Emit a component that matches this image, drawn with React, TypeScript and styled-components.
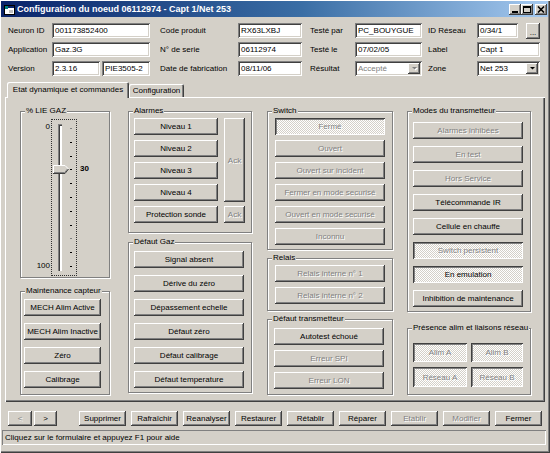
import React from 'react';
import styled, { createGlobalStyle, css } from 'styled-components';

const FACE = '#d4d0c8';
const SHADOW = '#808080';
const DARK = '#404040';

const GlobalStyle = createGlobalStyle`
  html, body {
    margin: 0;
    padding: 0;
    background: #fff;
  }
  body {
    font-family: "Liberation Sans", Arial, sans-serif;
    font-size: 8px;
  }
  * {
    box-sizing: border-box;
  }
`;

const Window = styled.div`
  width: 550px;
  height: 453px;
  padding: 1px 2px 0 1px;
  display: flex;
  flex-direction: column;
  background: ${FACE};
  color: #000;
  overflow: hidden;
  box-shadow: inset 1px 1px #fff, inset -1px -1px ${DARK}, inset -2px -2px ${SHADOW};
`;

const TitleBar = styled.div`
  height: 16px;
  display: flex;
  align-items: center;
  padding: 0 1px 0 3px;
  background: linear-gradient(90deg, #0a246a 0%, #3a6ea5 55%, #a6caf0 100%);
  color: #fff;
  font-size: 9px;
  font-weight: bold;
  white-space: nowrap;
`;

const TitleText = styled.span`
  margin-left: 2px;
`;

const TitleButtons = styled.div`
  margin-left: auto;
  display: flex;
  align-items: center;
`;

const CaptionBtn = styled.div<{ $gap?: boolean }>`
  width: 12px;
  height: 11px;
  margin-left: ${p => (p.$gap ? 2 : 0)}px;
  display: flex;
  align-items: center;
  justify-content: center;
  background: ${FACE};
  box-shadow: inset -1px -1px ${DARK}, inset 1px 1px #fff, inset -2px -2px ${SHADOW};
`;

const Form = styled.div`
  display: grid;
  grid-template-columns: 44px 98px 88px 64px 53px 67px 55px 63px;
  grid-auto-rows: 15px;
  row-gap: 4px;
  margin: 6px 0 0 7px;
`;

const Label = styled.div<{ $indent?: number }>`
  display: flex;
  align-items: center;
  padding-left: ${p => p.$indent ?? 0}px;
  white-space: nowrap;
`;

const Field = styled.div<{ $w?: number; $muted?: boolean }>`
  width: ${p => (p.$w ? `${p.$w}px` : '100%')};
  height: 15px;
  display: flex;
  align-items: center;
  padding-left: 3px;
  background: #fff;
  color: ${p => (p.$muted ? SHADOW : '#000')};
  white-space: nowrap;
  overflow: hidden;
  box-shadow: inset 1px 1px ${SHADOW}, inset -1px -1px #fff, inset 2px 2px ${DARK}, inset -2px -2px ${FACE};
`;

const FieldText = styled.span`
  flex: 1;
`;

const DropBtn = styled.div`
  width: 12px;
  height: 11px;
  margin-right: 2px;
  display: flex;
  align-items: center;
  justify-content: center;
  background: ${FACE};
  box-shadow: inset -1px -1px ${DARK}, inset 1px 1px #fff, inset -2px -2px ${SHADOW};
`;

const Pair = styled.div`
  display: flex;
  align-items: center;
  gap: 2px;
`;

const Btn = styled.button<{ $w?: number; $h?: number; $checked?: boolean }>`
  width: ${p => (p.$w ? `${p.$w}px` : '100%')};
  height: ${p => p.$h ?? 17}px;
  flex: none;
  padding: 0;
  border: none;
  font: 8px "Liberation Sans", Arial, sans-serif;
  color: #000;
  white-space: nowrap;
  background: ${FACE};
  box-shadow: inset -1px -1px ${DARK}, inset 1px 1px #fff, inset -2px -2px ${SHADOW};
  ${p =>
    p.$checked &&
    css`
      background-color: #fff;
      background-image: conic-gradient(${FACE} 25%, #fff 0 50%, ${FACE} 0 75%, #fff 0);
      background-size: 2px 2px;
      box-shadow: inset 1px 1px ${DARK}, inset -1px -1px #fff, inset 2px 2px ${SHADOW};
    `}
  &:disabled {
    color: ${SHADOW};
    text-shadow: 1px 1px #fff;
  }
`;

const DotsBtn = styled(Btn)`
  align-self: center;
  margin-left: 6px;
  padding-top: 4px;
`;

const TabStrip = styled.div`
  height: 16px;
  display: flex;
  align-items: flex-end;
  margin: 6px 0 -1px 6px;
`;

const Tab = styled.div<{ $active?: boolean; $w: number }>`
  position: relative;
  z-index: ${p => (p.$active ? 2 : 0)};
  width: ${p => p.$w}px;
  height: ${p => (p.$active ? 16 : 13)}px;
  margin-bottom: ${p => (p.$active ? 0 : 1)}px;
  display: flex;
  align-items: center;
  justify-content: center;
  padding-bottom: ${p => (p.$active ? 2 : 0)}px;
  background: ${FACE};
  border-radius: 2px 2px 0 0;
  white-space: nowrap;
  box-shadow: inset 1px 1px #fff, inset -1px 0 ${DARK}, inset -2px 0 ${SHADOW};
`;

const Panel = styled.div`
  height: 305px;
  margin: 0 3px 0 4px;
  padding: 14px 0 0 15px;
  display: flex;
  align-items: flex-start;
  box-shadow: inset 1px 1px #fff, inset -1px -1px ${DARK}, inset -2px -2px ${SHADOW};
`;

const Column = styled.div<{ $w: number; $ml?: number }>`
  width: ${p => p.$w}px;
  margin-left: ${p => p.$ml ?? 0}px;
  display: flex;
  flex-direction: column;
`;

const Group = styled.div<{ $h: number; $mt?: number; $pt: number; $pl: number }>`
  height: ${p => p.$h}px;
  margin-top: ${p => p.$mt ?? 0}px;
  padding: 0 0 0 ${p => p.$pl}px;
  border: 1px solid ${SHADOW};
  box-shadow: inset 1px 1px #fff, 1px 1px #fff;
  & > :nth-child(2) {
    margin-top: ${p => p.$pt}px;
  }
`;

const Legend = styled.div`
  width: fit-content;
  height: 10px;
  margin: -6px 0 -4px ${-1}px;
  padding: 0 1px;
  line-height: 10px;
  background: ${FACE};
  white-space: nowrap;
`;

const LegendWrap = styled.div<{ $pl: number }>`
  margin-left: ${p => 4 - p.$pl + 1}px;
`;

const Stack = styled.div<{ $gap: number; $w?: number }>`
  display: flex;
  flex-direction: column;
  gap: ${p => p.$gap}px;
  width: ${p => (p.$w ? `${p.$w}px` : 'auto')};
`;

const AlarmGrid = styled.div`
  display: grid;
  grid-template-columns: 84px 21px;
  grid-auto-rows: 17px;
  column-gap: 6px;
  row-gap: 5px;
`;

const TallCell = styled.div`
  grid-column: 2;
  grid-row: 1 / span 4;
`;

const PresenceGrid = styled.div`
  display: grid;
  grid-template-columns: 54px 52px;
  grid-template-rows: 19px 20px;
  column-gap: 4px;
  row-gap: 5px;
`;

/* slider ("% LIE GAZ") */
const SliderRow = styled.div`
  display: flex;
  align-items: flex-start;
`;

const ScaleLabels = styled.div`
  width: 30px;
  height: 157px;
  padding: 3px 1px 5px 0;
  display: flex;
  flex-direction: column;
  justify-content: space-between;
  align-items: flex-end;
  line-height: 10px;
`;

const SliderBox = styled.div`
  position: relative;
  width: 26px;
  height: 157px;
  display: flex;
  align-items: flex-start;
  border: 1px dotted #303030;
`;

const Track = styled.div`
  width: 4px;
  height: 147px;
  margin: 4px 0 0 6px;
  background: #fff;
  box-shadow: inset 1px 1px ${SHADOW}, inset 2px 2px ${DARK}, inset -1px -1px #fff;
`;

const Ticks = styled.div`
  height: 139px;
  margin: 8px 0 0 8px;
  display: flex;
  flex-direction: column;
  justify-content: space-between;
`;

const Tick = styled.div<{ $light?: boolean }>`
  width: 2px;
  height: 1px;
  background: ${p => (p.$light ? SHADOW : '#000')};
`;

const Thumb = styled.svg`
  position: absolute;
  left: 1px;
`;

const SliderValue = styled.div`
  margin-left: 3px;
  line-height: 10px;
  font-weight: bold;
`;

const BottomRow = styled.div`
  display: flex;
  align-items: center;
  margin: 9px 0 0 7px;
`;

const NavGroup = styled.div`
  display: flex;
  gap: 2px;
  margin-right: 22px;
`;

const ActionGroup = styled.div`
  display: flex;
  gap: 5px;
`;

const StatusBar = styled.div`
  height: 15px;
  margin: 4px 2px 0 1px;
  padding-left: 3px;
  line-height: 15px;
  white-space: nowrap;
  box-shadow: inset 1px 1px ${SHADOW}, inset -1px -1px #fff;
`;

const Arrow = ({ disabled }: { disabled?: boolean }) => (
  <svg width="7" height="5" viewBox="0 0 7 5">
    {disabled && <polygon points="2,2 7,2 4.5,4.5" fill="#fff" />}
    <polygon points="1,1 6,1 3.5,3.5" fill={disabled ? SHADOW : '#000'} />
  </svg>
);

const WinIcon = () => (
  <svg width="11" height="11" viewBox="0 0 11 11">
    <rect x="0.5" y="1.5" width="10" height="9" fill="#fff" stroke="#000" />
    <rect x="1" y="2" width="9" height="2" fill="#0a246a" />
    <rect x="1" y="2" width="3" height="3" fill="#008080" />
    <rect x="5" y="6" width="4" height="3" fill="#c0c0c0" />
  </svg>
);

const MinGlyph = () => (
  <svg width="8" height="7" viewBox="0 0 8 7">
    <rect x="1" y="5" width="6" height="2" fill="#000" />
  </svg>
);

const MaxGlyph = () => (
  <svg width="8" height="7" viewBox="0 0 8 7">
    <rect x="0.5" y="0.5" width="7" height="6" fill="none" stroke="#000" />
    <rect x="0" y="0" width="8" height="2" fill="#000" />
  </svg>
);

const CloseGlyph = () => (
  <svg width="8" height="7" viewBox="0 0 8 7">
    <path d="M1 0.5 L7 6.5 M7 0.5 L1 6.5" stroke="#000" strokeWidth="1.6" />
  </svg>
);

const GroupBox: React.FC<{
  title: string;
  h: number;
  mt?: number;
  pt: number;
  pl: number;
  children: React.ReactNode;
}> = ({ title, h, mt, pt, pl, children }) => (
  <Group $h={h} $mt={mt} $pt={pt} $pl={pl}>
    <LegendWrap $pl={pl}>
      <Legend>{title}</Legend>
    </LegendWrap>
    {children}
  </Group>
);

const GAS_VALUE = 30;

const App: React.FC = () => {
  const thumbCenter = 8 + (GAS_VALUE / 100) * 138;
  const ticks = Array.from({ length: 11 }, (_, i) => i);

  return (
    <>
      <GlobalStyle />
      <Window>
        <TitleBar>
          <WinIcon />
          <TitleText>Configuration du noeud 06112974 - Capt 1/Net 253</TitleText>
          <TitleButtons>
            <CaptionBtn><MinGlyph /></CaptionBtn>
            <CaptionBtn><MaxGlyph /></CaptionBtn>
            <CaptionBtn $gap><CloseGlyph /></CaptionBtn>
          </TitleButtons>
        </TitleBar>

        <Form>
          <Label>Neuron ID</Label>
          <Field>001173852400</Field>
          <Label $indent={10}>Code produit</Label>
          <Field>RX63LXBJ</Field>
          <Label $indent={8}>Testé par</Label>
          <Field>PC_BOUYGUE</Field>
          <Label $indent={6}>ID Réseau</Label>
          <Pair>
            <Field $w={43}>0/34/1</Field>
            <DotsBtn $w={14} $h={16}>...</DotsBtn>
          </Pair>

          <Label>Application</Label>
          <Field>Gaz.3G</Field>
          <Label $indent={10}>N° de serie</Label>
          <Field>06112974</Field>
          <Label $indent={8}>Testé le</Label>
          <Field>07/02/05</Field>
          <Label $indent={6}>Label</Label>
          <Field>Capt 1</Field>

          <Label>Version</Label>
          <Pair>
            <Field $w={48}>2.3.16</Field>
            <Field $w={48}>PIE3505-2</Field>
          </Pair>
          <Label $indent={10}>Date de fabrication</Label>
          <Field>08/11/06</Field>
          <Label $indent={8}>Résultat</Label>
          <Field $muted>
            <FieldText>Accepté</FieldText>
            <DropBtn><Arrow disabled /></DropBtn>
          </Field>
          <Label $indent={6}>Zone</Label>
          <Field>
            <FieldText>Net 253</FieldText>
            <DropBtn><Arrow /></DropBtn>
          </Field>
        </Form>

        <TabStrip>
          <Tab $active $w={122}>Etat dynamique et commandes</Tab>
          <Tab $w={55}>Configuration</Tab>
        </TabStrip>

        <Panel>
          <Column $w={90}>
            <GroupBox title="% LIE GAZ" h={167} pt={7} pl={0}>
              <SliderRow>
                <ScaleLabels>
                  <span>0</span>
                  <span>100</span>
                </ScaleLabels>
                <SliderBox>
                  <Track />
                  <Ticks>
                    {ticks.map(t => (
                      <Tick key={t} $light={t === 0 || t === 8} />
                    ))}
                  </Ticks>
                  <Thumb
                    width="17"
                    height="9"
                    viewBox="0 0 17 9"
                    style={{ top: Math.round(thumbCenter - 4.5) }}
                  >
                    <polygon points="0,0 12,0 16,4 12,8 0,8" fill={FACE} />
                    <polyline points="0.5,8 0.5,0.5 12,0.5 15.5,4" fill="none" stroke="#fff" />
                    <polyline points="15.5,4 12,8.5 0,8.5" fill="none" stroke={DARK} />
                    <polyline points="14.5,4 11.7,7.5 1,7.5" fill="none" stroke={SHADOW} />
                  </Thumb>
                </SliderBox>
                <SliderValue style={{ marginTop: Math.round(thumbCenter + 1 - 5) }}>
                  {GAS_VALUE}
                </SliderValue>
              </SliderRow>
            </GroupBox>

            <GroupBox title="Maintenance capteur" h={104} mt={13} pt={7} pl={3}>
              <Stack $gap={7} $w={77}>
                <Btn>MECH Alim Active</Btn>
                <Btn>MECH Alim Inactive</Btn>
                <Btn>Zéro</Btn>
                <Btn>Calibrage</Btn>
              </Stack>
            </GroupBox>
          </Column>

          <Column $w={124} $ml={18}>
            <GroupBox title="Alarmes" h={122} pt={6} pl={5}>
              <AlarmGrid>
                <Btn>Niveau 1</Btn>
                <TallCell>
                  <Btn $h={84} disabled>Ack</Btn>
                </TallCell>
                <Btn>Niveau 2</Btn>
                <Btn>Niveau 3</Btn>
                <Btn>Niveau 4</Btn>
                <Btn>Protection sonde</Btn>
                <Btn disabled>Ack</Btn>
              </AlarmGrid>
            </GroupBox>

            <GroupBox title="Défaut Gaz" h={151} mt={9} pt={8} pl={5}>
              <Stack $gap={7} $w={110}>
                <Btn>Signal absent</Btn>
                <Btn>Dérive du zéro</Btn>
                <Btn>Dépassement echelle</Btn>
                <Btn>Défaut zéro</Btn>
                <Btn>Défaut calibrage</Btn>
                <Btn>Défaut temperature</Btn>
              </Stack>
            </GroupBox>
          </Column>

          <Column $w={126} $ml={15}>
            <GroupBox title="Switch" h={139} pt={6} pl={7}>
              <Stack $gap={5} $w={110}>
                <Btn disabled $checked>Fermé</Btn>
                <Btn disabled>Ouvert</Btn>
                <Btn disabled>Ouvert sur incident</Btn>
                <Btn disabled>Fermer en mode securisé</Btn>
                <Btn disabled>Ouvert en mode securisé</Btn>
                <Btn disabled>Inconnu</Btn>
              </Stack>
            </GroupBox>

            <GroupBox title="Relais" h={53} mt={8} pt={6} pl={7}>
              <Stack $gap={5} $w={110}>
                <Btn disabled>Relais interne n° 1</Btn>
                <Btn disabled>Relais interne n° 2</Btn>
              </Stack>
            </GroupBox>

            <GroupBox title="Défaut transmetteur" h={76} mt={8} pt={8} pl={6}>
              <Stack $gap={5} $w={110}>
                <Btn>Autotest échoué</Btn>
                <Btn disabled>Erreur SPI</Btn>
                <Btn disabled>Erreur LON</Btn>
              </Stack>
            </GroupBox>
          </Column>

          <Column $w={124} $ml={14}>
            <GroupBox title="Modes du transmetteur" h={201} pt={10} pl={5}>
              <Stack $gap={7} $w={110}>
                <Btn disabled>Alarmes inhibées</Btn>
                <Btn disabled>En test</Btn>
                <Btn disabled>Hors Service</Btn>
                <Btn>Télécommande IR</Btn>
                <Btn>Cellule en chauffe</Btn>
                <Btn disabled $checked>Switch persistent</Btn>
                <Btn $checked>En emulation</Btn>
                <Btn>Inhibition de maintenance</Btn>
              </Stack>
            </GroupBox>

            <GroupBox title="Présence alim et liaisons réseau" h={67} mt={16} pt={14} pl={5}>
              <PresenceGrid>
                <Btn $h={19} disabled $checked>Alim A</Btn>
                <Btn $h={19} disabled $checked>Alim B</Btn>
                <Btn $h={20} disabled $checked>Réseau A</Btn>
                <Btn $h={20} disabled $checked>Réseau B</Btn>
              </PresenceGrid>
            </GroupBox>
          </Column>
        </Panel>

        <BottomRow>
          <NavGroup>
            <Btn $w={24} $h={15} disabled>&lt;</Btn>
            <Btn $w={23} $h={15}>&gt;</Btn>
          </NavGroup>
          <ActionGroup>
            <Btn $w={47} $h={15}>Supprimer</Btn>
            <Btn $w={47} $h={15}>Rafraîchir</Btn>
            <Btn $w={47} $h={15}>Reanalyser</Btn>
            <Btn $w={47} $h={15}>Restaurer</Btn>
            <Btn $w={47} $h={15}>Rétablir</Btn>
            <Btn $w={47} $h={15}>Réparer</Btn>
            <Btn $w={47} $h={15} disabled>Etablir</Btn>
            <Btn $w={47} $h={15} disabled>Modifier</Btn>
            <Btn $w={47} $h={15}>Fermer</Btn>
          </ActionGroup>
        </BottomRow>

        <StatusBar>Cliquez sur le formulaire et appuyez F1 pour aide</StatusBar>
      </Window>
    </>
  );
};

export default App;
